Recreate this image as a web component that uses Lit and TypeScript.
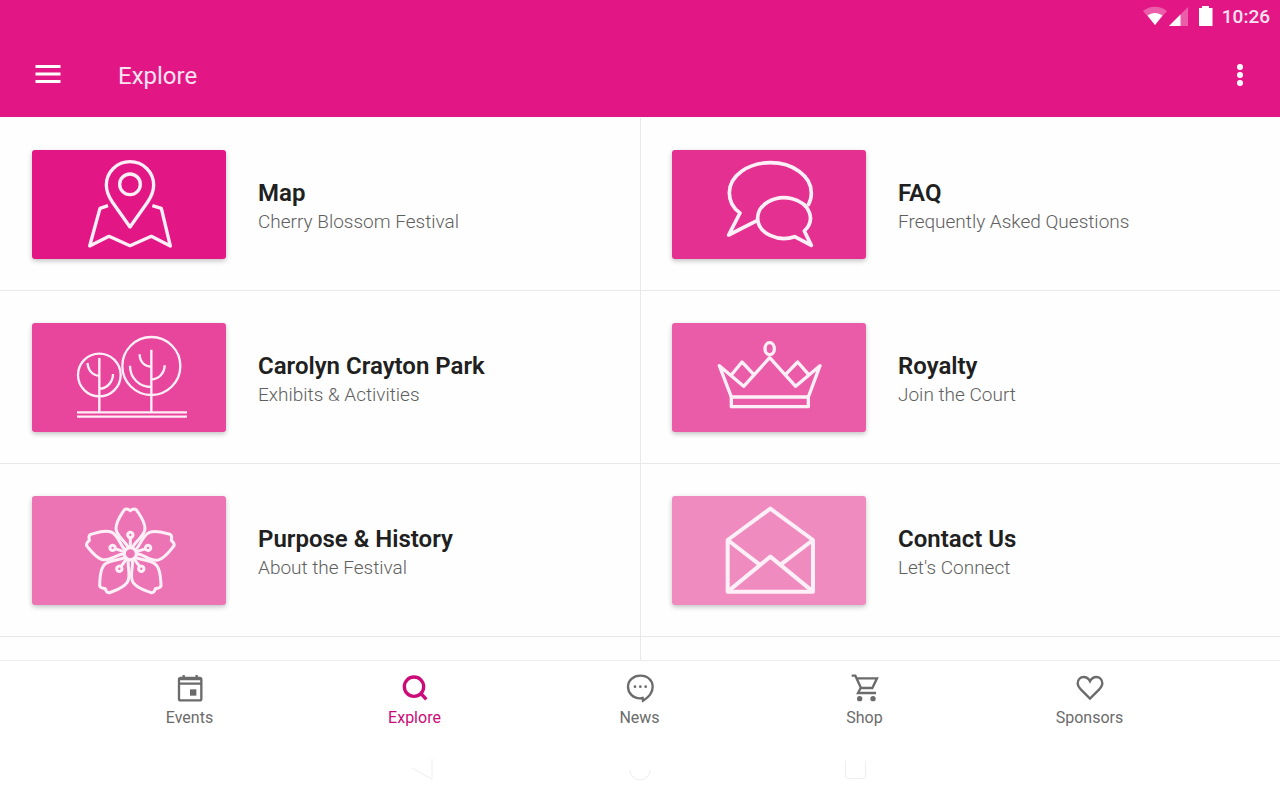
import { LitElement, html, css, svg, type SVGTemplateResult } from "lit";
import { customElement, property } from "lit/decorators.js";
import { classMap } from "lit/directives/class-map.js";
import { styleMap } from "lit/directives/style-map.js";

interface Tile {
  title: string;
  subtitle: string;
  color: string;
  viewBox: string;
  stroke: number;
  art: SVGTemplateResult;
}

interface Tab {
  label: string;
  viewBox: string;
  art: SVGTemplateResult;
}

const petal = (angle: number) => svg`
  <g transform="rotate(${angle} 331 203)">
    <path d="M325 186C319 167 289 152 288 128C288 105 304 86 313 71C320 66 326 71 331 74C336 71 342 66 349 71C358 86 375 105 375 128C374 152 343 167 337 186"/>
    <circle cx="331" cy="147" r="8"/>
    <path d="M331 156V186"/>
  </g>`;

const tiles: Tile[] = [
  {
    title: "Map",
    subtitle: "Cherry Blossom Festival",
    color: "#e21785",
    viewBox: "36 29 582 327",
    stroke: 10,
    art: svg`
      <path d="M330 260L277 185C263 164 259 150 259 134A71 70 0 0 1 401 134C401 150 397 164 383 185Z"/>
      <circle cx="330" cy="132" r="31"/>
      <path d="M264 196L240 204L209 317L267 288L330 316L394 288L451 317L424 204L397 196"/>`,
  },
  {
    title: "FAQ",
    subtitle: "Frequently Asked Questions",
    color: "#e43091",
    viewBox: "36 29 582 327",
    stroke: 11,
    art: svg`
      <path d="M443 196C451 184 454 170 454 157A123 90 0 1 0 208 157C208 182 219 203 240 218L206 284L291 241"/>
      <path d="M404 289A79 61 0 1 1 433 272L454 315Z"/>`,
  },
  {
    title: "Carolyn Crayton Park",
    subtitle: "Exhibits & Activities",
    color: "#e8469c",
    viewBox: "36 32 582 327",
    stroke: 7,
    art: svg`
      <circle cx="238" cy="188" r="64"/>
      <circle cx="394" cy="161" r="87"/>
      <path d="M238 137V300M394 112V300M171 300H501M171 313H501"/>
      <path d="M203 152A35 38 0 0 0 238 190M279 185A41 44 0 0 1 238 229"/>
      <path d="M359 126C359 148 374 163 394 163M434 159A40 42 0 0 1 394 201M330 160C330 197 358 224 394 224"/>`,
  },
  {
    title: "Royalty",
    subtitle: "Join the Court",
    color: "#ea5ca8",
    viewBox: "36 32 582 327",
    stroke: 10,
    art: svg`
      <ellipse cx="329" cy="109" rx="14" ry="18"/>
      <path d="M214 254L178 160L251 222L329 136L407 222L480 160L445 254"/>
      <path d="M214 188L246 149L281 186M377 186L413 149L446 187"/>
      <path d="M214 254H445V283H214Z"/>`,
  },
  {
    title: "Purpose & History",
    subtitle: "About the Festival",
    color: "#ed74b4",
    viewBox: "36 30 582 327",
    stroke: 9,
    art: svg`
      <circle cx="331" cy="203" r="18"/>
      ${[0, 72, 144, 216, 288].map(petal)}`,
  },
  {
    title: "Contact Us",
    subtitle: "Let's Connect",
    color: "#f08bc0",
    viewBox: "36 30 582 327",
    stroke: 12,
    art: svg`
      <path d="M203 162L331 68L459 162V317H203Z"/>
      <path d="M203 162L299 236M459 162L362 236M203 317L331 212L459 317"/>`,
  },
];

const tabs: Tab[] = [
  {
    label: "Events",
    viewBox: "102 66 96 96",
    art: svg`
      <rect x="117" y="84" width="67" height="67" rx="5"/>
      <path d="M117 87H184M117 101H184M131 75V84M170 75V84"/>
      <path class="solid" d="M150 118H169V137H150Z"/>`,
  },
  {
    label: "Explore",
    viewBox: "775 66 96 96",
    art: svg`
      <circle cx="820" cy="110" r="29"/>
      <path d="M842 132L857 148"/>`,
  },
  {
    label: "News",
    viewBox: "69 126 96 96",
    art: svg`
      <path d="M125 204C121 205 120 205 117 205C96 205 81 189 81 170C81 151 97 137 118 137C140 137 155 151 155 170C155 188 144 201 126 212Z"/>
      <circle class="solid" cx="102" cy="170" r="4"/>
      <circle class="solid" cx="118" cy="170" r="4"/>
      <circle class="solid" cx="134" cy="170" r="4"/>`,
  },
  {
    label: "Shop",
    viewBox: "744 126 96 96",
    art: svg`
      <path d="M752 137H763L780 174H814L828 145H768M779 174L771 189H825"/>
      <circle class="solid" cx="776" cy="206" r="8"/>
      <circle class="solid" cx="816" cy="206" r="8"/>`,
  },
  {
    label: "Sponsors",
    viewBox: "218 66 96 96",
    art: svg`
      <path d="M266 146L239 119C231 111 229 107 229 100C229 89 237 81 247 81C255 81 262 86 266 94C270 86 277 81 285 81C295 81 303 89 303 100C303 107 301 111 293 119Z"/>`,
  },
];

@customElement("status-bar")
class StatusBar extends LitElement {
  static styles = css`
    :host {
      display: flex;
      align-items: center;
      justify-content: flex-end;
      height: 32px;
      padding-right: 10px;
      color: #fde3f1;
      font-size: 19px;
      font-weight: 500;
      line-height: 30px;
    }
    .icons {
      width: 72px;
      height: 20px;
      margin-right: 7px;
      fill: #fff;
    }
    .time {
      padding-top: 2px;
    }
    .dim {
      opacity: 0.3;
    }
  `;

  render() {
    return html`
      <svg class="icons" viewBox="0 0 72 20" aria-hidden="true">
        <path class="dim" d="M0 5C7-0.700 17-0.700 24 5L12 19Z" />
        <path d="M4.500 9.500C9 6 15 6 19.500 9.500L12 19Z" />
        <path class="dim" d="M26 20L45 1V20Z" />
        <path d="M26 20L37.500 8.500V20Z" />
        <path d="M56 2H59V0H66V2H69.500V20H56Z" />
      </svg>
      <span class="time">10:26</span>
    `;
  }
}

@customElement("explore-tile")
class ExploreTile extends LitElement {
  @property({ attribute: false }) tile!: Tile;

  static styles = css`
    :host {
      display: block;
    }
    .link {
      display: flex;
      align-items: center;
      gap: 32px;
      height: 100%;
      box-sizing: border-box;
      padding: 0 32px;
      color: inherit;
      text-decoration: none;
    }
    .card {
      flex: none;
      width: 194px;
      height: 109px;
      border-radius: 3px;
      box-shadow: 0 2px 5px rgba(0, 0, 0, 0.24);
    }
    .art {
      display: block;
      width: 100%;
      height: 100%;
      fill: none;
      stroke: #fff0f8;
      stroke-linejoin: round;
    }
    .text {
      padding-top: 4px;
    }
    .title {
      margin: 0;
      font-size: 24px;
      font-weight: 600;
      line-height: 30px;
      color: #202020;
    }
    .subtitle {
      margin: 0;
      font-size: 19px;
      font-weight: 300;
      line-height: 27px;
      color: #606060;
    }
  `;

  render() {
    const { title, subtitle, color, viewBox, stroke, art } = this.tile;
    return html`
      <a class="link" href="#">
        <div class="card" style=${styleMap({ backgroundColor: color })}>
          <svg class="art" viewBox=${viewBox} stroke-width=${stroke} aria-hidden="true">${art}</svg>
        </div>
        <div class="text">
          <h2 class="title">${title}</h2>
          <p class="subtitle">${subtitle}</p>
        </div>
      </a>
    `;
  }
}

@customElement("tab-bar")
class TabBar extends LitElement {
  @property() active = "";

  static styles = css`
    :host {
      display: block;
      background: #fff;
      border-top: 1px solid #ececec;
    }
    .tabs {
      display: flex;
      justify-content: center;
      height: 75px;
      padding-right: 1px;
    }
    .tab {
      flex: 0 1 225px;
      display: flex;
      flex-direction: column;
      align-items: center;
      padding-top: 11px;
      color: #6b6b6b;
      font-size: 16px;
      line-height: 24px;
      text-decoration: none;
    }
    .active {
      color: #cb0c78;
    }
    .icon {
      width: 32px;
      height: 32px;
      margin-bottom: 2px;
      fill: none;
      stroke: currentColor;
      stroke-width: 7px;
    }
    .active .icon {
      stroke-width: 10px;
    }
    .icon .solid {
      fill: currentColor;
      stroke: none;
    }
  `;

  render() {
    return html`
      <nav class="tabs" aria-label="Sections">
        ${tabs.map(
          (tab) => html`
            <a class=${classMap({ tab: true, active: tab.label === this.active })} href="#">
              <svg class="icon" viewBox=${tab.viewBox} aria-hidden="true">${tab.art}</svg>
              <span>${tab.label}</span>
            </a>
          `,
        )}
      </nav>
    `;
  }
}

@customElement("app-root")
class AppRoot extends LitElement {
  static styles = css`
    :host {
      display: flex;
      flex-direction: column;
      height: 100vh;
      background: #fefefe;
      font-family: Roboto, sans-serif;
    }
    .header {
      flex: none;
      background: #e21785;
    }
    .toolbar {
      display: flex;
      align-items: center;
      height: 85px;
      padding: 0 24px 0 32px;
    }
    .heading {
      flex: 1;
      margin: 0 0 0 54px;
      padding-top: 2px;
      color: #fde3f1;
      font-size: 24px;
      font-weight: 400;
      line-height: 32px;
    }
    .action {
      width: 32px;
      height: 32px;
      padding: 0;
      border: 0;
      background: none;
      color: #fff;
    }
    .glyph {
      display: block;
      width: 32px;
      height: 32px;
      fill: currentColor;
    }
    .content {
      flex: 1;
      min-height: 0;
      overflow: hidden;
    }
    .grid {
      display: grid;
      grid-template-columns: 1fr 1fr;
      grid-auto-rows: 173px;
      padding-top: 1px;
    }
    .cell {
      box-sizing: border-box;
      border-bottom: 1px solid #e8e8e8;
      padding-top: 1px;
    }
    .cell:nth-child(even) {
      background: linear-gradient(#e8e8e8, #e8e8e8) left / 1px 100% no-repeat;
    }
    .tabs {
      flex: none;
    }
    .system {
      flex: none;
      box-sizing: border-box;
      display: flex;
      align-items: center;
      justify-content: center;
      gap: 184px;
      height: 64px;
      padding-bottom: 2px;
      background: #fff;
    }
    .key {
      width: 32px;
      height: 32px;
      padding: 0;
      border: 0;
      background: none;
    }
    .keyglyph {
      display: block;
      width: 32px;
      height: 32px;
      fill: none;
      stroke: #eee;
    }
  `;

  render() {
    return html`
      <header class="header">
        <status-bar></status-bar>
        <div class="toolbar">
          <button class="action" type="button" aria-label="Menu">
            <svg class="glyph" viewBox="0 0 32 32">
              <path d="M3.500 6H28.500V9H3.500ZM3.500 13.500H28.500V16.500H3.500ZM3.500 21H28.500V24H3.500Z" />
            </svg>
          </button>
          <h1 class="heading">Explore</h1>
          <button class="action" type="button" aria-label="More options">
            <svg class="glyph" viewBox="0 0 32 32">
              <circle cx="16" cy="8" r="3" />
              <circle cx="16" cy="16" r="3" />
              <circle cx="16" cy="24" r="3" />
            </svg>
          </button>
        </div>
      </header>
      <main class="content">
        <div class="grid">
          ${tiles.map((tile) => html`<explore-tile class="cell" .tile=${tile}></explore-tile>`)}
          <div class="cell"></div>
          <div class="cell"></div>
        </div>
      </main>
      <tab-bar class="tabs" active="Explore"></tab-bar>
      <div class="system">
        <button class="key" type="button" aria-label="Back">
          <svg class="keyglyph" viewBox="0 0 32 32"><path d="M4 17L24 28V8" /></svg>
        </button>
        <button class="key" type="button" aria-label="Home">
          <svg class="keyglyph" viewBox="0 0 32 32"><path d="M6 19A10 10 0 0 0 26 19" /></svg>
        </button>
        <button class="key" type="button" aria-label="Recent apps">
          <svg class="keyglyph" viewBox="0 0 32 32">
            <path d="M5.500 10V25.500Q5.500 27.500 7.500 27.500H23.500Q25.500 27.500 25.500 25.500V10" />
          </svg>
        </button>
      </div>
    `;
  }
}
